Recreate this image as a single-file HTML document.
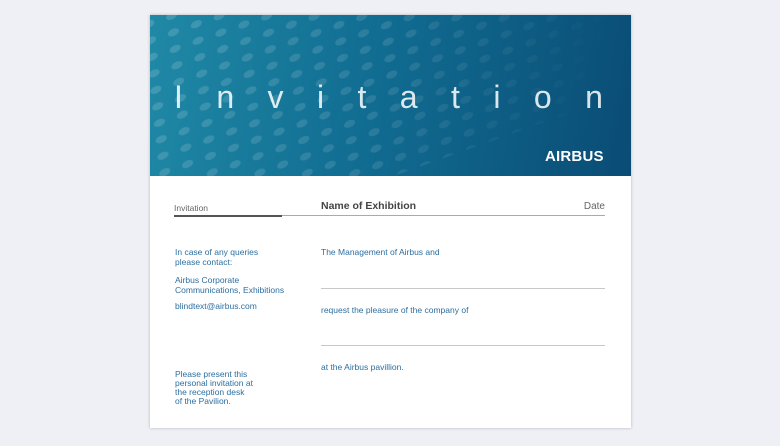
<!DOCTYPE html>
<html><head><style>
body{margin:0;width:780px;height:446px;background:#eef0f5;font-family:"Liberation Sans",sans-serif;position:relative;overflow:hidden}
.card{position:absolute;left:150px;top:15px;width:481px;height:413px;background:#fff;box-shadow:0 0 3px rgba(0,0,0,.25)}
.ban{position:absolute;left:0;top:0;width:481px;height:161px;background:linear-gradient(100deg,#2089a6 0%,#116d92 45%,#0a4c75 100%);overflow:hidden}
.dots{position:absolute;left:-40px;width:600px;background-image:radial-gradient(ellipse 6px 4px at 50% 50%,rgba(255,255,255,.16) 85%,transparent 100%);background-size:23px 17px;transform:skewY(-14deg) rotate(-6deg);transform-origin:0 0;-webkit-mask-image:linear-gradient(110deg,#000 0%,rgba(0,0,0,.7) 45%,transparent 80%);mask-image:linear-gradient(110deg,#000 0%,rgba(0,0,0,.7) 45%,transparent 80%);top:-20px;height:280px}
.title{position:absolute;left:24px;width:429px;top:64px;display:flex;justify-content:space-between;color:rgba(255,255,255,.85);font-size:32px;line-height:36px}
.logo{position:absolute;left:395px;top:133px;color:#fff;font-weight:bold;font-size:15px;letter-spacing:.2px}
.t{position:absolute;font-size:8.5px;color:#2c6ea0;line-height:9.5px;white-space:nowrap}
.hl{position:absolute;height:1px;background:#c8c8c8}
</style></head><body>
<div class="card">
<div class="ban"><div class="dots"></div>
<div class="title"><span>I</span><span>n</span><span>v</span><span>i</span><span>t</span><span>a</span><span>t</span><span>i</span><span>o</span><span>n</span></div>
<div class="logo">AIRBUS</div></div>
<div class="t" style="left:24px;top:189px;color:#666;font-size:8.5px">Invitation</div>
<div class="t" style="left:171px;top:187px;color:#444;font-size:10.5px;font-weight:bold">Name of Exhibition</div>
<div class="t" style="right:26px;top:187px;color:#666;font-size:10px">Date</div>
<div class="hl" style="left:24px;width:431px;top:200px;background:#aaa"></div>
<div style="position:absolute;left:24px;width:108px;top:200px;height:2px;background:#555"></div>
<div class="t" style="left:25px;top:233px">In case of any queries<br>please contact:</div>
<div class="t" style="left:25px;top:261px">Airbus Corporate<br>Communications, Exhibitions</div>
<div class="t" style="left:25px;top:287px">blindtext@airbus.com</div>
<div class="t" style="left:25px;top:355px;line-height:9px">Please present this<br>personal invitation at<br>the reception desk<br>of the Pavilion.</div>
<div class="t" style="left:171px;top:233px">The Management of Airbus and</div>
<div class="hl" style="left:171px;width:284px;top:273px"></div>
<div class="t" style="left:171px;top:291px">request the pleasure of the company of</div>
<div class="hl" style="left:171px;width:284px;top:330px"></div>
<div class="t" style="left:171px;top:348px">at the Airbus pavillion.</div>
</div>
</body></html>
